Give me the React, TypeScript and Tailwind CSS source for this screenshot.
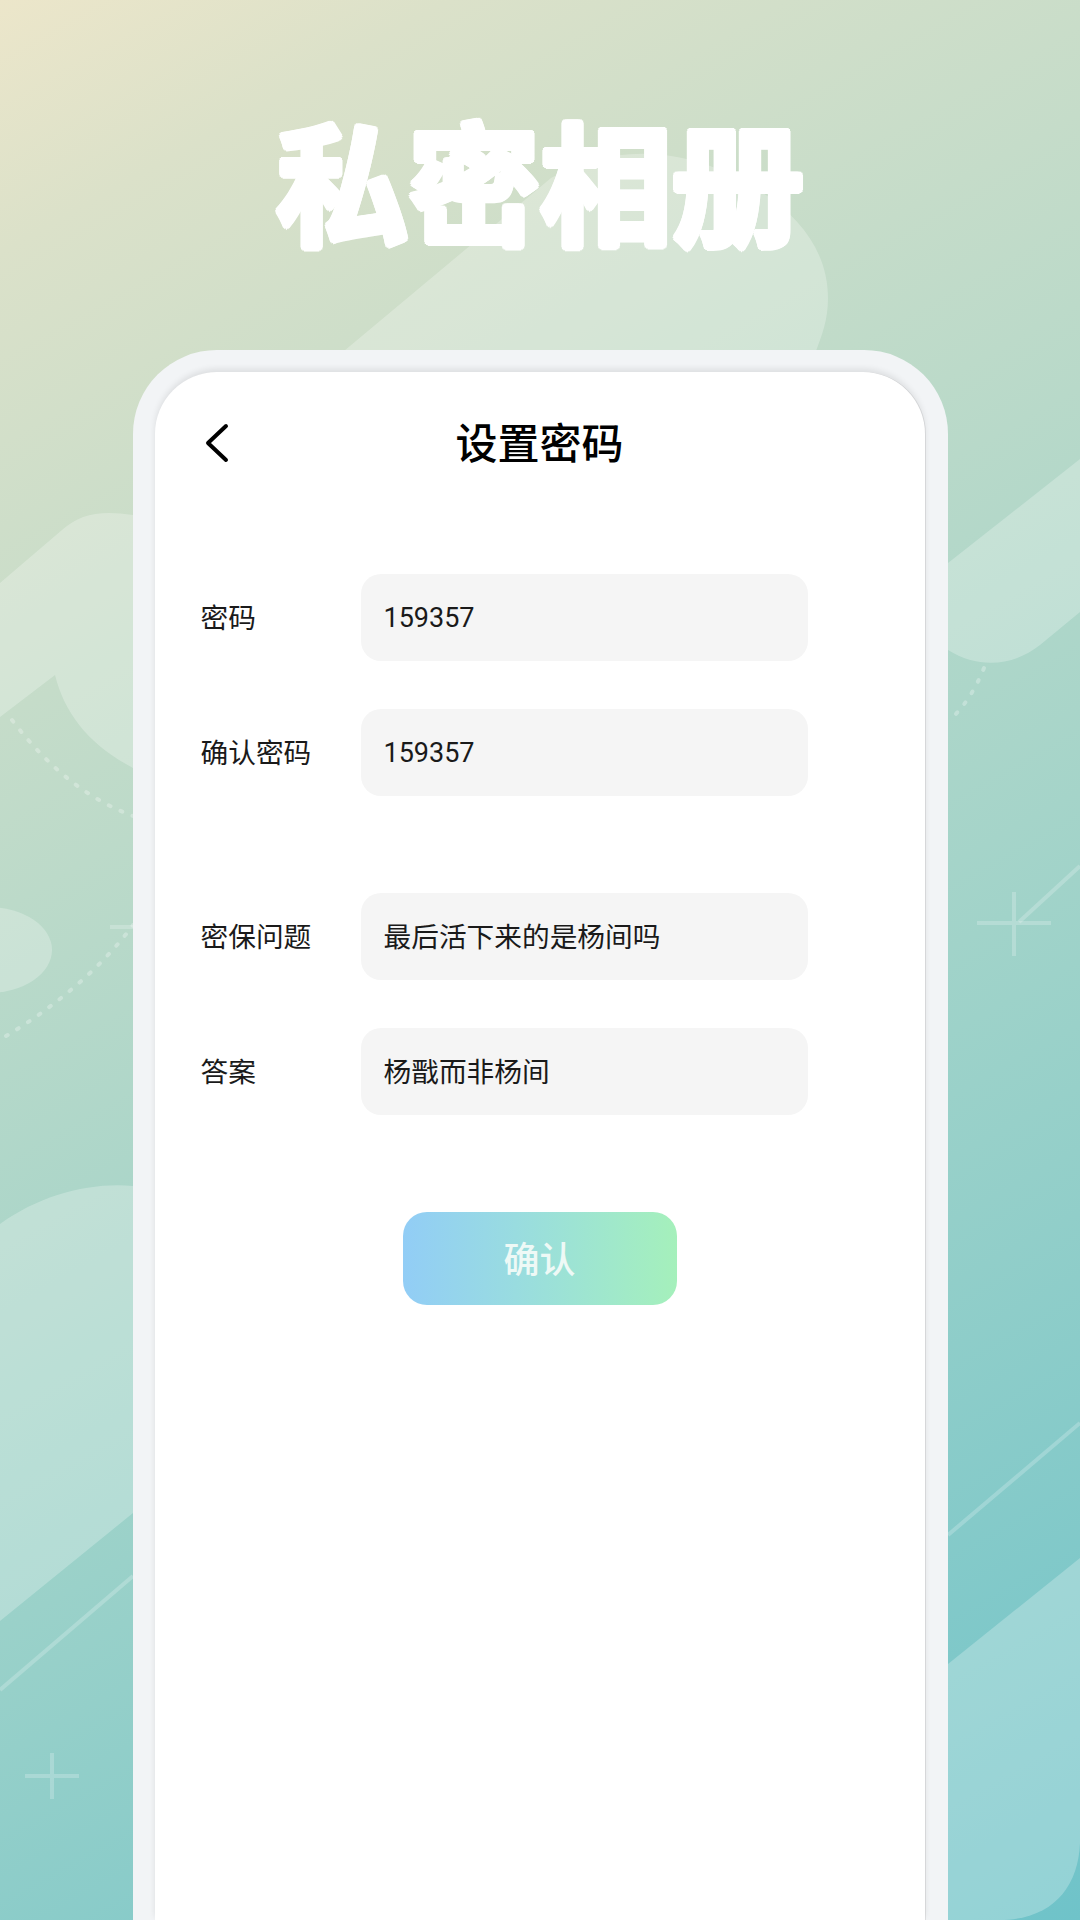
import React from "react";

function Backdrop() {
  return (
    <svg className="absolute inset-0" width="1080" height="1920" viewBox="0 0 1080 1920">
      <defs>
        <linearGradient id="bg" gradientUnits="userSpaceOnUse" x1="0" y1="0" x2="1080" y2="1920">
          <stop offset="0" stopColor="#ece6ca" />
          <stop offset="0.1" stopColor="#dbe1c9" />
          <stop offset="0.36" stopColor="#bcdac9" />
          <stop offset="0.62" stopColor="#9dd2c9" />
          <stop offset="1" stopColor="#6fc3c9" />
        </linearGradient>
      </defs>
      <rect width="1080" height="1920" fill="url(#bg)" />
      <g fill="#ffffff" fillOpacity="0.25">
        <path d="M344 351 L551 178 C600 150 661 145 720 170 C790 200 828 245 828 298 C828 320 822 335 816 351 Z" />
        <path d="M0 583 L62 530 C80 514 100 510 133 515 L133 768 C90 745 65 715 55 675 L0 717 Z" />
        <path d="M948 563 L1080 459 L1080 612 L1040 645 C1015 665 980 670 948 650 Z" />
        <path d="M0 1224 C40 1195 90 1182 133 1186 L133 1513 L0 1621 Z" />
        <path d="M948 1664 L1080 1558 L1080 1843 C1078 1890 1050 1920 999 1920 L948 1920 Z" />
        <ellipse cx="-12" cy="950" rx="64" ry="43" />
      </g>
      <g stroke="#ffffff" strokeOpacity="0.22" strokeWidth="4" fill="none">
        <path d="M0 1690 L133 1576" />
        <path d="M948 1535 L1080 1423" />
        <path d="M1019 922 L1080 866" />
        <path d="M977 923 L1051 923 M1014 892 L1014 956" />
        <path d="M25 1776 L79 1776 M52 1753 L52 1799" />
        <path d="M110 927 L133 927" />
      </g>
      <g stroke="#ffffff" strokeOpacity="0.28" strokeWidth="4" strokeDasharray="2 11" strokeLinecap="round" fill="none">
        <path d="M12 720 C50 770 90 800 133 816" />
        <path d="M6 1036 C50 1010 100 970 133 925" />
        <path d="M984 668 C975 690 965 705 952 718" />
      </g>
    </svg>
  );
}

function Row({
  label,
  value,
  numeric = false,
  className = "",
}: {
  label: string;
  value: string;
  numeric?: boolean;
  className?: string;
}) {
  return (
    <div className={`flex items-center ${className}`}>
      <div className="w-[160px] pt-[2px] text-[27.7px] text-[#1a1a1a]">{label}</div>
      <div
        className={`flex h-[87px] w-[447px] items-center rounded-[20px] bg-[#f5f5f5] pt-[2px] pl-[23px] text-[#1a1a1a] ${
          numeric ? "text-[27px]" : "text-[27.7px]"
        }`}
      >
        {value}
      </div>
    </div>
  );
}

export default function App() {
  return (
    <div
      className="relative h-[1920px] w-[1080px] overflow-hidden"
      style={{ fontFamily: 'Roboto, "Noto Sans CJK SC", sans-serif' }}
    >
      <Backdrop />
      <div className="relative flex h-[350px] items-start justify-center pt-[110px]">
        <h1 className="text-[132px] leading-[160px] font-bold text-white [text-shadow:3.5px_0_0_#fff,3px_1.8px_0_#fff,1.8px_3px_0_#fff,0_3.5px_0_#fff,-1.8px_3px_0_#fff,-3px_1.8px_0_#fff,-3.5px_0_0_#fff,-3px_-1.8px_0_#fff,-1.8px_-3px_0_#fff,0_-3.5px_0_#fff,1.8px_-3px_0_#fff,3px_-1.8px_0_#fff]">
          私密相册
        </h1>
      </div>
      <div className="relative mx-auto h-[1570px] w-[815px] rounded-t-[84px] bg-[#f2f4f6] pr-[23px] pl-[22px] pt-[22px]">
        <div className="h-full rounded-t-[62px] bg-white pl-[46px] shadow-[0_-3px_6px_rgba(0,0,0,0.09),1px_0_0_rgba(0,0,0,0.08)]">
          <div className="relative flex h-[86px] translate-y-[28px] items-center justify-center pt-[3px] pr-[46px]">
            <svg className="absolute left-[2px] top-[20px]" width="32" height="48" viewBox="0 0 32 48" fill="none">
              <path d="M23 6 L5 23 L23 40" stroke="#000" strokeWidth="4" strokeLinecap="round" strokeLinejoin="round" />
            </svg>
            <div className="text-[42px] font-medium text-black">设置密码</div>
          </div>
          <div className="pt-[116px]">
            <Row label="密码" value="159357" numeric />
            <Row label="确认密码" value="159357" numeric className="mt-[48px]" />
            <Row label="密保问题" value="最后活下来的是杨间吗" className="mt-[97px]" />
            <Row label="答案" value="杨戬而非杨间" className="mt-[48px]" />
          </div>
          <div className="mt-[97px] flex justify-center pr-[46px]">
            <div className="flex h-[93px] w-[274px] items-center justify-center rounded-[24px] bg-gradient-to-r from-[#92cdf6] to-[#a5f0bb] pt-[4px] text-[36px] font-medium text-[#eef9f6]">
              确认
            </div>
          </div>
        </div>
      </div>
    </div>
  );
}
